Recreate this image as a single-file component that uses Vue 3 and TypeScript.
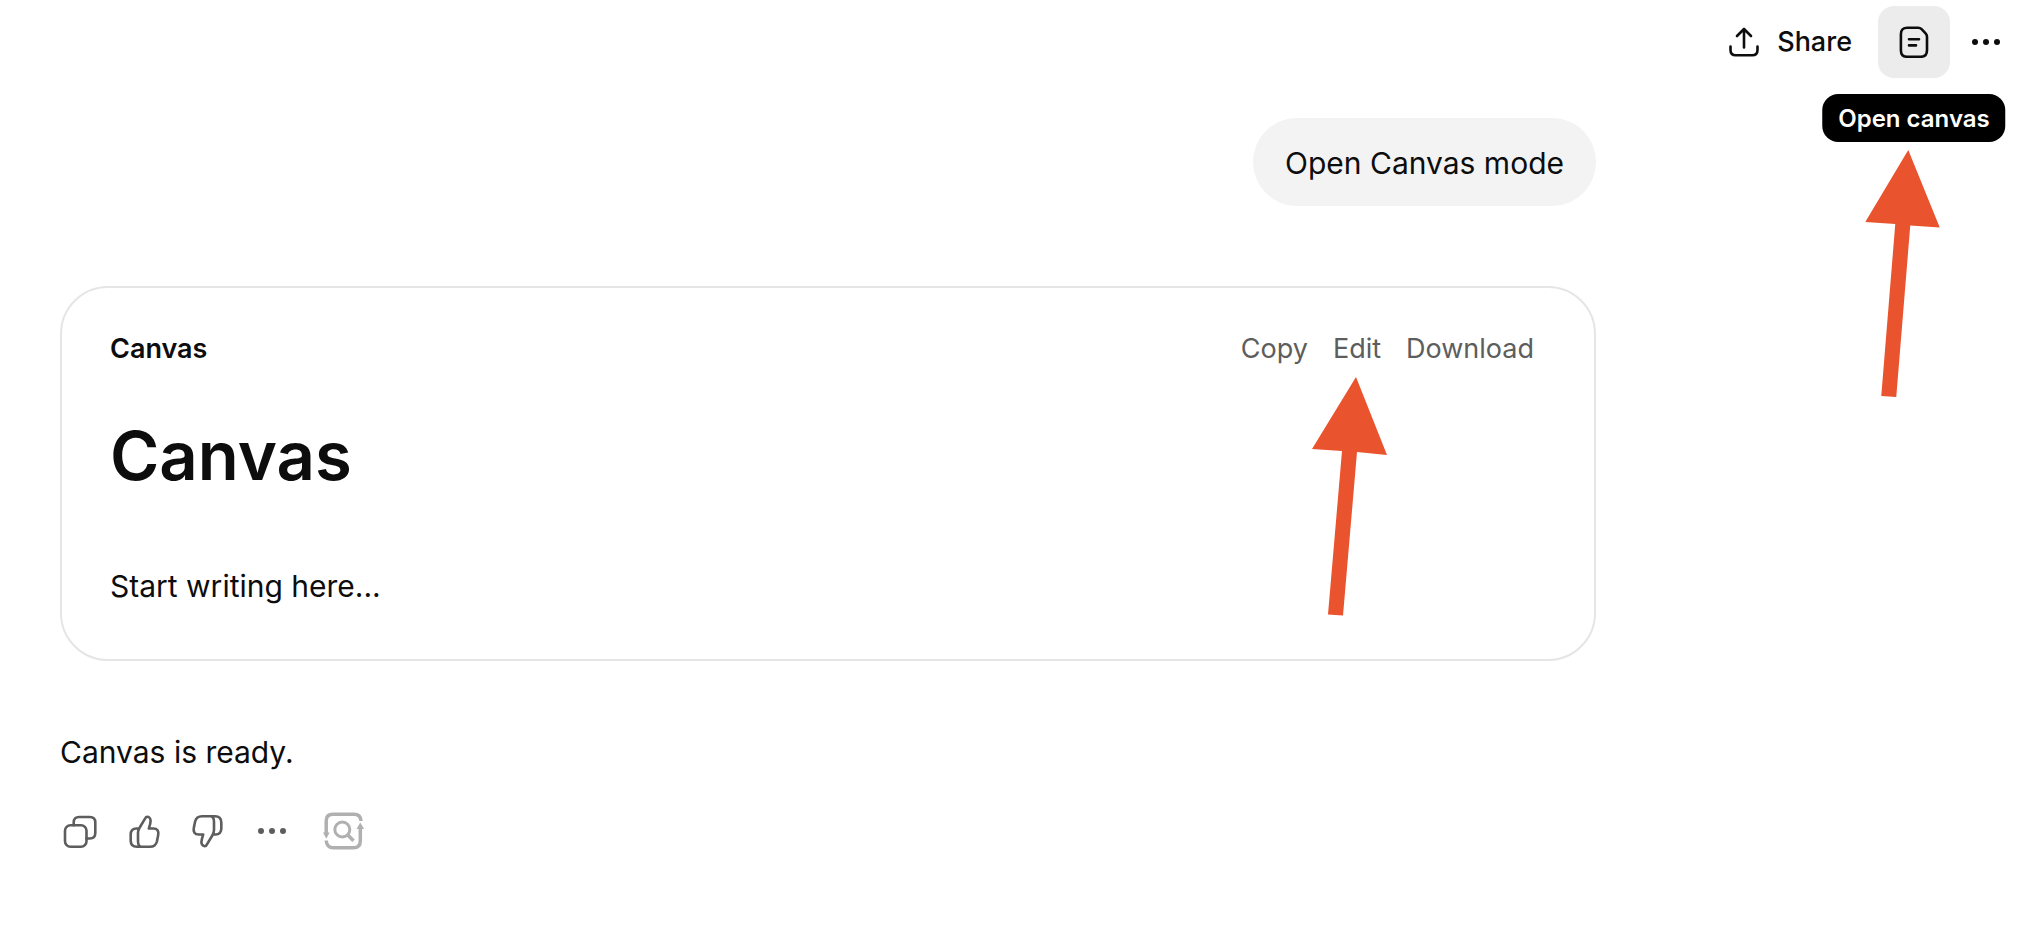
<script setup lang="ts">
const cardActions: { label: string; pointed: boolean }[] = [
  { label: 'Copy', pointed: false },
  { label: 'Edit', pointed: true },
  { label: 'Download', pointed: false },
]
</script>

<template>
  <div class="page">
    <header class="topbar">
      <button type="button" class="share">
        <svg width="30" height="30" viewBox="0 0 30 30" class="line" aria-hidden="true">
          <path d="M15 20.5V2.5M8 9l7-7 7 7M1.5 19.5v3.5c0 3.6 1.8 5.3 5.3 5.3h16.4c3.5 0 5.3-1.700 5.300-5.300v-3.500" />
        </svg>
        <span>Share</span>
      </button>
      <div class="canvas-toggle">
        <button type="button" class="toggle" aria-label="Open canvas" aria-describedby="canvas-tip">
          <svg width="30" height="32" viewBox="0 0 30 32" class="line" aria-hidden="true">
            <path d="M8.500 1.800h10.700c1.400 0 2.400.4 3.400 1.400l4 4.200c1 1 1.400 2 1.400 3.400v13.400c0 4.600-2 6.600-6.600 6.600H8.500c-4.600 0-6.600-2-6.600-6.600V8.400c0-4.600 2-6.600 6.600-6.600zM10 13.200h10M10 19.400h7" />
          </svg>
        </button>
        <div id="canvas-tip" role="tooltip" class="tooltip">
          Open canvas
          <svg class="arrow tip-arrow" width="76" height="248" viewBox="0 0 76 248" aria-hidden="true">
            <path d="M43 0l31.500 77.500-29.500-2-14 171.500-15-1 14-172-30-2z" />
          </svg>
        </div>
      </div>
      <button type="button" class="more" aria-label="More options">
        <svg width="30" height="8" viewBox="0 0 30 8" class="dots" aria-hidden="true">
          <circle cx="4" cy="4" r="3" /><circle cx="15" cy="4" r="3" /><circle cx="26" cy="4" r="3" />
        </svg>
      </button>
    </header>

    <main class="thread">
      <p class="bubble">Open Canvas mode</p>

      <article class="card">
        <div class="card-head">
          <span class="card-title">Canvas</span>
          <div class="card-actions">
            <button v-for="action in cardActions" :key="action.label" type="button" class="text-button">
              {{ action.label }}
              <svg v-if="action.pointed" class="arrow edit-arrow" width="76" height="240" viewBox="0 0 76 240" aria-hidden="true">
                <path d="M44 0l31 78-30-3-14 163.500-15-1 14-163.500-30-2z" />
              </svg>
            </button>
          </div>
        </div>
        <h1>Canvas</h1>
        <p class="body-text">Start writing here...</p>
      </article>

      <p class="reply">Canvas is ready.</p>

      <div class="reply-actions">
        <button type="button" aria-label="Copy response">
          <svg width="36" height="36" viewBox="0 0 36 36" class="line" aria-hidden="true">
            <rect x="3" y="12.300" width="21.500" height="21.500" rx="5.500" />
            <path d="M11.700 12.300V9.500c0-3.700 1.800-5.500 5.500-5.500h10.600c3.700 0 5.500 1.800 5.500 5.500v10.500c0 3.700-1.800 5.500-5.500 5.500h-3.300" />
          </svg>
        </button>
        <button type="button" aria-label="Good response">
          <svg width="36" height="36" viewBox="0 0 36 36" class="line" aria-hidden="true">
            <path d="M13 15.500h-2.500C6.500 15.500 4.700 18 4.700 21.500v6c0 4.200 2 6.300 6.300 6.300h13c4 0 6-1.800 6.900-5.300l1.300-6.500c.8-4-1-6.500-4.700-6.500h-4.700c1-3 1.800-5.300 1.800-7.700 0-2.500-1.700-4-3.400-4-1 0-1.600.7-2 1.500l-5.500 9.200c-1.200 1.900-1.700 3.300-1.700 5.500v8c0 3.500 1 5.800 3.700 5.800" />
          </svg>
        </button>
        <button type="button" aria-label="Bad response">
          <svg width="36" height="36" viewBox="0 0 36 36" class="line" aria-hidden="true">
            <path transform="rotate(180 18 18.500)" d="M13 15.500h-2.500C6.500 15.500 4.700 18 4.700 21.500v6c0 4.200 2 6.300 6.300 6.300h13c4 0 6-1.800 6.900-5.300l1.300-6.500c.8-4-1-6.500-4.700-6.500h-4.700c1-3 1.800-5.300 1.800-7.700 0-2.500-1.700-4-3.400-4-1 0-1.600.7-2 1.500l-5.500 9.200c-1.200 1.900-1.700 3.300-1.700 5.500v8c0 3.500 1 5.800 3.700 5.800" />
          </svg>
        </button>
        <button type="button" aria-label="More actions">
          <svg width="30" height="8" viewBox="0 0 30 8" class="dots" aria-hidden="true">
            <circle cx="4" cy="4" r="3" /><circle cx="15" cy="4" r="3" /><circle cx="26" cy="4" r="3" />
          </svg>
        </button>
        <button type="button" class="scan" aria-label="Search again">
          <svg width="42" height="40" viewBox="-1 0 42 40" aria-hidden="true">
            <g fill="none" stroke="currentColor" stroke-width="3.500">
              <path d="M37 10c-.3-4.500-2.500-6.700-7-6.700H9c-4.500 0-6.800 2.300-6.800 6.700v12M2.200 29.500c.3 5 2.600 7.300 7.300 7.300H29.500c4.600 0 6.800-2.300 6.800-6.800V17" />
              <circle cx="18.300" cy="18.500" r="7.500" stroke-width="3" />
              <path d="M23.500 23.700l6 6" />
            </g>
            <path fill="currentColor" d="M-1 21.500h6.600l-3.300 6.200zM32.500 18h7.600l-3.800-6.500z" />
          </svg>
        </button>
      </div>
    </main>
  </div>
</template>

<style>
body {
  margin: 0;
  background: #fff;
}
</style>

<style scoped>
.page {
  color: #0d0d0d;
  font-family: Inter, "Liberation Sans", sans-serif;
  font-size: 30px;
  line-height: 48px;
}

button {
  display: flex;
  align-items: center;
  justify-content: center;
  padding: 0;
  border: 0;
  background: none;
  color: inherit;
  font: inherit;
  cursor: pointer;
}

p,
h1 {
  margin: 0;
}

svg {
  display: block;
  flex: none;
}

.line {
  fill: none;
  stroke: currentColor;
  stroke-width: 2.600;
  stroke-linecap: round;
  stroke-linejoin: round;
}

.dots {
  fill: currentColor;
}

.topbar {
  display: flex;
  align-items: center;
  justify-content: flex-end;
  height: 84px;
  padding-right: 12px;
}

.share {
  gap: 18px;
  height: 72px;
  margin-right: 26px;
  font-size: 27px;
  font-weight: 500;
}

.canvas-toggle {
  position: relative;
}

.toggle {
  width: 72px;
  height: 72px;
  border-radius: 16px;
  background: #ececec;
}

.more {
  width: 72px;
  height: 72px;
}

.tooltip {
  position: absolute;
  top: 88px;
  left: 50%;
  box-sizing: border-box;
  height: 48px;
  padding: 1px 16px 0;
  border-radius: 16px;
  background: #000;
  color: #fff;
  font-size: 24px;
  font-weight: 600;
  white-space: nowrap;
  transform: translateX(-50%);
}

.arrow {
  position: absolute;
  fill: #e9532d;
  pointer-events: none;
}

.tip-arrow {
  top: 56px;
  left: 43px;
}

.edit-arrow {
  top: 52px;
  left: -21px;
}

.thread {
  display: flex;
  flex-direction: column;
  max-width: 1536px;
  padding: 34px 60px;
}

.bubble {
  align-self: flex-end;
  padding: 21px 32px 19px;
  border-radius: 44px;
  background: #f3f3f3;
}

.card {
  margin-top: 80px;
  padding: 37px 60px 49px 48px;
  border: 2px solid #e5e5e5;
  border-radius: 48px;
}

.card-head {
  display: flex;
  justify-content: space-between;
  font-size: 27px;
}

.card-title {
  font-weight: 600;
}

.card-actions {
  display: flex;
  gap: 25px;
}

.text-button {
  position: relative;
  color: #5d5d5d;
}

h1 {
  margin-top: 43px;
  font-size: 67px;
  font-weight: 600;
  line-height: 80px;
}

.body-text {
  margin-top: 66px;
}

.reply {
  margin-top: 67px;
}

.reply-actions {
  display: flex;
  margin: 23px 0 0 -12px;
  color: #5d5d5d;
}

.reply-actions button {
  width: 64px;
  height: 64px;
}

.reply-actions .scan {
  width: 80px;
  color: #b0b0b0;
}
</style>
